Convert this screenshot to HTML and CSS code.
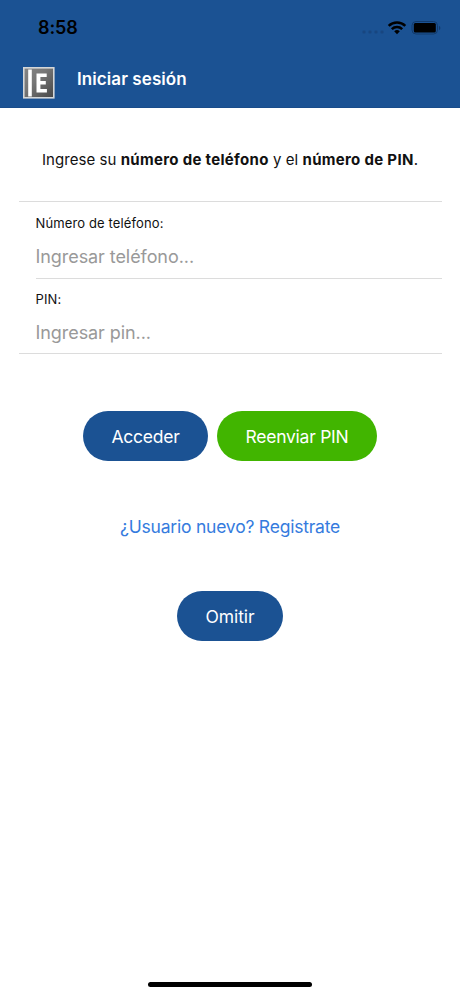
FILE: index.html
```html
<!DOCTYPE html>
<html lang="es">
<head>
<meta charset="utf-8">
<title>Iniciar sesión</title>
<link rel="stylesheet" href="styles.css">
</head>
<body>
<header class="header">
  <div class="status">
    <span class="time">8:58</span>
    <svg class="indicators" width="80" height="16" viewBox="0 0 80 16">
      <g fill="#184680">
        <rect x="1.500" y="10.500" width="3" height="3" rx="1"/>
        <rect x="7.500" y="10.500" width="3" height="3" rx="1"/>
        <rect x="13.500" y="10.500" width="3" height="3" rx="1"/>
        <rect x="19.500" y="10.500" width="3" height="3" rx="1"/>
      </g>
      <g fill="none" stroke="#000" stroke-width="2.500">
        <path d="M27.700 5.800a12 12 0 0 1 16.600 0"/>
        <path d="M30.800 9.200a7.500 7.500 0 0 1 10.400 0"/>
      </g>
      <path d="M33.200 11.300a4.200 4.200 0 0 1 5.600 0L36 14.200z"/>
      <rect x="51" y="1.500" width="25.500" height="12.500" rx="4" fill="none" stroke="#123a6b"/>
      <rect x="52.800" y="3" width="22" height="9.500" rx="1.500"/>
      <path d="M78 5.800v4.500q1.400-.8 1.400-2.250T78 5.800z" fill="#123a6b"/>
    </svg>
  </div>
  <div class="toolbar">
    <svg class="logo" width="32" height="32" viewBox="0 0 32 32">
      <defs>
        <linearGradient id="plate" x1="0" y1="0" x2="1" y2="1">
          <stop offset="0" stop-color="#858585"/>
          <stop offset=".4" stop-color="#777"/>
          <stop offset="1" stop-color="#464646"/>
        </linearGradient>
      </defs>
      <rect x=".8" y=".8" width="30" height="30" fill="url(#plate)" stroke="#d5d7d8" stroke-width="1.600"/>
      <path d="M5.200 2.500h3.600v27H5.200z" fill="#fff"/>
      <path d="M13.500 6.500h10.200v3.400h-6.300v4.200h5.400v3.500h-5.400v4.400h6.500v3.500H13.500z" fill="#fff"/>
    </svg>
    <h1 class="title">Iniciar sesión</h1>
  </div>
</header>
<main class="content">
  <p class="intro">Ingrese su <b>número de teléfono</b> y el <b>número de PIN</b>.</p>
  <form class="form">
    <label class="field"><span class="label">Número de teléfono:</span><input class="input phone" type="tel" placeholder="Ingresar teléfono..."></label>
    <label class="field"><span class="label">PIN:</span><input class="input" type="password" placeholder="Ingresar pin..."></label>
  </form>
  <div class="actions">
    <button class="button access">Acceder</button>
    <button class="button resend">Reenviar PIN</button>
  </div>
  <a class="register">¿Usuario nuevo? Registrate</a>
  <button class="button skip">Omitir</button>
</main>
<footer class="home"></footer>
</body>
</html>
```
FILE: styles.css
```css
* { box-sizing: border-box; }
body {
  margin: 0;
  height: 996px;
  display: flex;
  flex-direction: column;
  background: #fff;
  color: #111;
  font-family: Inter, "Liberation Sans", sans-serif;
}
.header { height: 108px; background: #1b5293; border-bottom: 1px solid #194c8a; }
.status {
  height: 56px;
  padding: 0 19px 0 38px;
  display: flex;
  justify-content: space-between;
  align-items: center;
}
.time { color: #000; font-size: 18px; font-weight: 600; line-height: 22px; letter-spacing: -.1px; }
.indicators { overflow: visible; }
.toolbar { display: flex; align-items: center; height: 52px; padding: 2px 0 0 23px; gap: 22px; }
.logo { display: block; }
.title { margin: -8px 0 0; color: #fff; font-size: 17px; line-height: 24px; font-weight: 600; letter-spacing: .08px; }
.content { flex: 1; display: flex; flex-direction: column; align-items: center; }
.intro { margin: 40px 0 30px; height: 23px; line-height: 23px; font-size: 15px; letter-spacing: .06px; white-space: nowrap; }
.intro b { font-weight: 700; letter-spacing: .31px; }
.form { width: 423px; border-top: 1px solid #dcdcdc; border-bottom: 1px solid #dcdcdc; }
.field { display: block; height: 76px; margin-left: 17px; padding-top: 12px; }
.field + .field { border-top: 1px solid #dcdcdc; height: 75px; padding-top: 11px; }
.label { display: block; height: 18px; line-height: 18px; font-size: 13px; letter-spacing: .13px; }
.input {
  display: block;
  width: 100%;
  height: 26px;
  margin-top: 12px;
  padding: 0;
  border: 0;
  outline: 0;
  font: 18px/26px Inter, "Liberation Sans", sans-serif;
  letter-spacing: -.07px;
}
.input::placeholder { color: #999; opacity: 1; }
.actions { display: flex; gap: 9px; margin-top: 57px; }
.button {
  height: 50px;
  padding: 2px 0 0;
  border: 0;
  border-radius: 25px;
  background: #1b5293;
  color: #fff;
  font: 17.5px/48px Inter, "Liberation Sans", sans-serif;
  letter-spacing: -.25px;
  text-align: center;
}
.access { width: 125px; }
.resend { width: 160px; background: #41b500; }
.register { margin: 53px 0 51px; line-height: 26px; font-size: 17.5px; letter-spacing: -.21px; color: #357bde; white-space: nowrap; }
.skip { width: 106px; letter-spacing: -.05px; }
.home { width: 164px; height: 5px; margin: 0 auto 9px; border-radius: 3px; background: #000; }
```
